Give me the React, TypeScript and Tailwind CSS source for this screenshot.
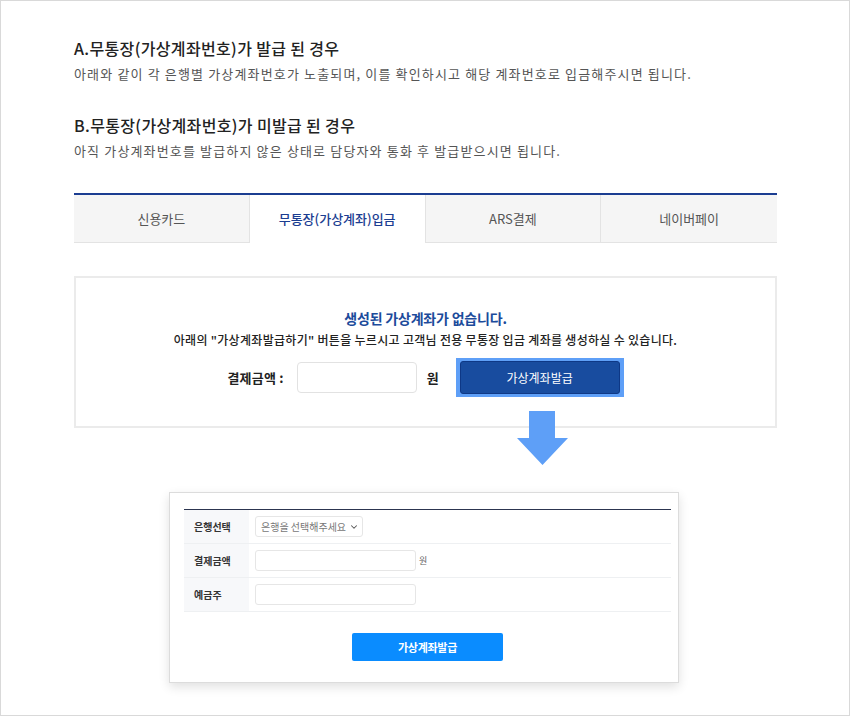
import React from "react";
import { ChevronDown } from "lucide-react";

const tabs = ["신용카드", "무통장(가상계좌)입금", "ARS결제", "네이버페이"];

export default function App() {
  return (
    <div className="w-[850px] h-[716px] border border-[#d9d9d9] bg-white font-['Noto_Sans_CJK_KR','Noto_Sans',sans-serif] text-[#333]">
      <div className="px-[73px] pt-[35px]">
        <h2 className="text-[16px] leading-[24px] font-medium text-[#222] tracking-[0.35px]">A.무통장(가상계좌번호)가 발급 된 경우</h2>
        <p className="mt-[4px] text-[13px] leading-[20px] text-[#555] tracking-[1.15px]">아래와 같이 각 은행별 가상계좌번호가 노출되며, 이를 확인하시고 해당 계좌번호로 입금해주시면 됩니다.</p>
        <h2 className="mt-[29px] text-[16px] leading-[24px] font-medium text-[#222] tracking-[0.35px]">B.무통장(가상계좌번호)가 미발급 된 경우</h2>
        <p className="mt-[4px] text-[13px] leading-[20px] text-[#555] tracking-[1.15px]">아직 가상계좌번호를 발급하지 않은 상태로 담당자와 통화 후 발급받으시면 됩니다.</p>

        {/* tabs */}
        <div className="mt-[32px] border-t-2 border-[#1b3d91] grid grid-cols-4 w-[703px]">
          {tabs.map((t, i) => {
            const active = i === 1;
            return (
              <div
                key={t}
                className={
                  active
                    ? "h-[48px] flex items-center justify-center bg-white border-r border-[#e3e3e3] text-[13px] font-medium text-[#1b3d91]"
                    : i === 3
                    ? "h-[48px] flex items-center justify-center bg-[#f5f5f5] border-b border-[#e3e3e3] text-[13px] text-[#555]"
                    : "h-[48px] flex items-center justify-center bg-[#f5f5f5] border-b border-r border-[#e3e3e3] text-[13px] text-[#555]"
                }
              >
                {t}
              </div>
            );
          })}
        </div>

        {/* no account box */}
        <div className="relative mt-[33px] w-[703px] border-2 border-[#ebebeb] pt-[30px] pb-[29px] flex flex-col items-center">
          <p className="text-[14px] leading-[20px] font-bold text-[#1c4b9b] tracking-[-0.2px]">생성된 가상계좌가 없습니다.</p>
          <p className="mt-[3px] text-[12px] leading-[18px] font-medium text-[#222] tracking-[0.3px]">
            아래의 "가상계좌발급하기" 버튼을 누르시고 고객님 전용 무통장 입금 계좌를 생성하실 수 있습니다.
          </p>
          <div className="mt-[9px] flex items-center">
            <span className="text-[13px] font-bold text-[#222] tracking-[0.2px]">결제금액 :</span>
            <div className="ml-[13px] w-[120px] h-[31px] rounded-[4px] border border-[#e2e2e2] bg-white" />
            <span className="ml-[10px] text-[13px] font-bold text-[#222]">원</span>
            <div className="ml-[17px] bg-[#5e9ff7] px-[4px] py-[3px]">
              <div className="w-[160px] h-[33px] rounded-[3px] bg-[#184c9f] border border-[#0e3886] flex items-center justify-center text-[12px] text-white">
                가상계좌발급
              </div>
            </div>
          </div>

          <svg className="absolute left-[441px] top-[133px]" width="51" height="54" viewBox="0 0 51 54">
            <polygon points="12,0 38,0 38,27 51,27 25.5,54 0,27 12,27" fill="#5e9ff7" />
          </svg>
        </div>

        {/* sample card */}
        <div className="mt-[64px] ml-[95px] w-[510px] h-[191px] border border-[#dcdcdc] bg-white shadow-[0_4px_10px_rgba(0,0,0,0.12)] pl-[14px] pr-[7px] pt-[16px]">
          <div className="border-t border-[#2c3550]">
            <div className="flex h-[34px] border-b border-[#eef0f2]">
              <div className="w-[65px] bg-[#f7f8fa] flex items-center pl-[10px] text-[10px] font-bold text-[#333]">은행선택</div>
              <div className="flex items-center pl-[6px]">
                <div className="w-[108px] h-[21px] rounded-[3px] border border-[#e6e6e6] flex items-center pl-[5px] gap-[3px] text-[10px] text-[#777]">
                  은행을 선택해주세요
                  <ChevronDown size={10} strokeWidth={2.5} className="text-[#555]" />
                </div>
              </div>
            </div>
            <div className="flex h-[34px] border-b border-[#eef0f2]">
              <div className="w-[65px] bg-[#f7f8fa] flex items-center pl-[10px] text-[10px] font-bold text-[#333]">결제금액</div>
              <div className="flex items-center pl-[6px]">
                <div className="w-[161px] h-[21px] rounded-[3px] border border-[#e6e6e6]" />
                <span className="ml-[3px] text-[9px] text-[#666]">원</span>
              </div>
            </div>
            <div className="flex h-[34px] border-b border-[#eef0f2]">
              <div className="w-[65px] bg-[#f7f8fa] flex items-center pl-[10px] text-[10px] font-bold text-[#333]">예금주</div>
              <div className="flex items-center pl-[6px]">
                <div className="w-[161px] h-[21px] rounded-[3px] border border-[#e6e6e6]" />
              </div>
            </div>
          </div>
          <div className="mt-[21px] flex justify-center">
            <div className="w-[151px] h-[28px] rounded-[2px] bg-[#0a8cff] flex items-center justify-center text-[11px] font-bold text-white tracking-[-0.3px]">
              가상계좌발급
            </div>
          </div>
        </div>
      </div>
    </div>
  );
}
